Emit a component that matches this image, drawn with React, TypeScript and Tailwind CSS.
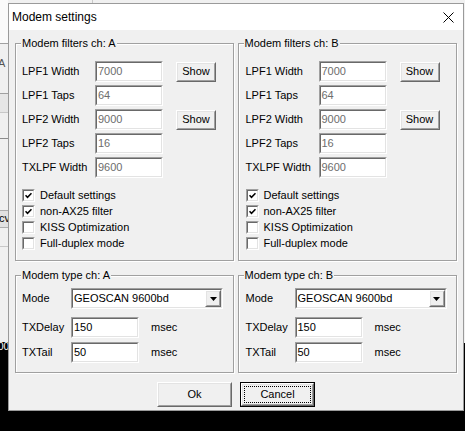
import React from "react";

function Sunken({ className = "", inner = "bg-white", children }: { className?: string; inner?: string; children?: React.ReactNode }) {
  return (
    <div className={`border border-t-[#a0a0a0] border-l-[#a0a0a0] border-r-white border-b-white ${className}`}>
      <div className={`h-full w-full border border-t-[#696969] border-l-[#696969] border-r-[#e3e3e3] border-b-[#e3e3e3] ${inner}`}>
        {children}
      </div>
    </div>
  );
}

function Raised({ className = "", children }: { className?: string; children?: React.ReactNode }) {
  return (
    <div className={`border border-t-white border-l-white border-r-[#696969] border-b-[#696969] bg-[#f0f0f0] ${className}`}>
      <div className="flex h-full w-full items-center justify-center border border-t-[#e3e3e3] border-l-[#e3e3e3] border-r-[#a0a0a0] border-b-[#a0a0a0]">
        {children}
      </div>
    </div>
  );
}

function Edit({ value, disabled = false, w = "w-[68px]" }: { value: string; disabled?: boolean; w?: string }) {
  return (
    <Sunken className={`${w} h-[21px]`} inner="bg-white flex items-center">
      <span className={`pl-[1px] leading-none ${disabled ? "text-[#6d6d6d]" : "text-black"}`}>{value}</span>
    </Sunken>
  );
}

function Check({ checked, label }: { checked: boolean; label: string }) {
  return (
    <div className="flex h-[15px] items-center">
      <Sunken className="h-[13px] w-[13px]" inner="bg-white flex items-center justify-center">
        {checked && (
          <svg width="7" height="7" viewBox="0 0 7 7">
            <path d="M0.5 3.2 L2.5 5.3 L6.5 1.2" fill="none" stroke="#000" strokeWidth="1.6" />
          </svg>
        )}
      </Sunken>
      <span className="ml-[5px]">{label}</span>
    </div>
  );
}

function Group({ title, className = "", children }: { title: string; className?: string; children?: React.ReactNode }) {
  return (
    <div className={`relative border border-[#a0a0a0] shadow-[inset_1px_1px_0_#fff,1px_1px_0_#fff] ${className}`}>
      <span className="absolute left-[5px] top-[-7px] bg-[#f0f0f0] px-[1px] leading-[13px]">{title}</span>
      {children}
    </div>
  );
}

function FilterRow({ label, value, show }: { label: string; value: string; show?: boolean }) {
  return (
    <div className="flex h-[21px] items-center">
      <span className="w-[73px]">{label}</span>
      <Edit value={value} disabled />
      {show && <Raised className="ml-[13px] h-[20px] w-[40px]">Show</Raised>}
    </div>
  );
}

function Filters({ ch, pl }: { ch: string; pl: string }) {
  return (
    <Group title={`Modem filters ch: ${ch}`} className={`h-[218px] ${ch === "A" ? "w-[219px]" : "w-[220px]"}`}>
      <div className={`flex flex-col pt-[17px] ${pl}`}>
        <div className="flex flex-col gap-[3px]">
          <FilterRow label="LPF1 Width" value="7000" show />
          <FilterRow label="LPF1 Taps" value="64" />
          <FilterRow label="LPF2 Width" value="9000" show />
          <FilterRow label="LPF2 Taps" value="16" />
          <FilterRow label="TXLPF Width" value="9600" />
        </div>
        <div className="mt-[10px] flex flex-col gap-[1px]">
          <Check checked label="Default settings" />
          <Check checked label="non-AX25 filter" />
          <Check checked={false} label="KISS Optimization" />
          <Check checked={false} label="Full-duplex mode" />
        </div>
      </div>
    </Group>
  );
}

function ModemType({ ch, pl }: { ch: string; pl: string }) {
  return (
    <Group title={`Modem type ch: ${ch}`} className={`h-[98px] ${ch === "A" ? "w-[219px]" : "w-[220px]"}`}>
      <div className={`flex flex-col pt-[12px] ${pl}`}>
        <div className="flex h-[21px] items-center">
          <span className="w-[49px]">Mode</span>
          <Sunken className="h-[21px] w-[152px]" inner="bg-white flex items-center">
            <span className="flex-1 pl-[1px]">GEOSCAN 9600bd</span>
            <Raised className="h-[17px] w-[16px]">
              <svg width="7" height="4" viewBox="0 0 7 4">
                <path d="M0 0 H7 L3.5 4 Z" fill="#000" />
              </svg>
            </Raised>
          </Sunken>
        </div>
        <div className="mt-[8px] flex flex-col gap-[4px]">
          <div className="flex h-[21px] items-center">
            <span className="w-[49px]">TXDelay</span>
            <Edit value="150" />
            <span className="ml-[12px]">msec</span>
          </div>
          <div className="flex h-[21px] items-center">
            <span className="w-[49px]">TXTail</span>
            <Edit value="50" />
            <span className="ml-[12px]">msec</span>
          </div>
        </div>
      </div>
    </Group>
  );
}

export default function App() {
  return (
    <div className="relative h-[431px] w-[465px] overflow-hidden bg-[#f0f0f0] font-['Liberation_Sans',Arial,sans-serif] text-[11px] text-black">
      {/* desktop background behind the dialog */}
      <div className="absolute left-0 top-0 h-[43px] w-[8px] bg-[#fafafa]" />
      <div className="absolute left-0 top-[43px] h-[1px] w-[8px] bg-[#a0a0a0]" />
      <span className="absolute left-[-2px] top-[55px] text-[11px] text-[#555]">A</span>
      <div className="absolute left-0 top-[93px] h-[1px] w-[8px] bg-[#a0a0a0]" />
      <div className="absolute left-0 top-[94px] h-[18px] w-[8px] bg-[#e6e6e6]" />
      <div className="absolute left-0 top-[112px] h-[1px] w-[8px] bg-[#c8c8c8]" />
      <div className="absolute left-0 top-[138px] h-[1px] w-[8px] bg-[#8c8c8c]" />
      <div className="absolute left-0 top-[210px] h-[18px] w-[8px] border-b border-t border-[#adadad] bg-[#e1e1e1]" />
      <span className="absolute left-[-1px] top-[211px] text-[11px] leading-[14px]">cv</span>
      <div className="absolute left-0 top-[246px] h-[1px] w-[8px] bg-[#c8c8c8]" />
      <div className="absolute left-0 top-[342px] h-[89px] w-[8px] bg-black" />
      <span className="absolute left-[-2px] top-[341px] text-[10px] leading-[12px] text-white">00</span>
      <div className="absolute left-[92px] top-0 h-[3px] w-[1px] bg-[#c8c8c8]" />
      <div className="absolute right-0 top-[343px] h-[88px] w-[2px] bg-black" />
      <div className="absolute bottom-0 left-0 h-[20px] w-[465px] bg-black" />

      {/* dialog window */}
      <div className="absolute left-[8px] top-[3px] flex h-[408px] w-[456px] flex-col border border-[#9a9a9a] bg-[#f0f0f0]">
        <div className="flex h-[26px] items-center justify-between bg-white">
          <span className="pl-[3px] text-[12px]">Modem settings</span>
          <svg width="11" height="11" viewBox="0 0 11 11" className="mr-[9px]">
            <path d="M0.5 0.5 L10.5 10.5 M10.5 0.5 L0.5 10.5" stroke="#000" strokeWidth="1" />
          </svg>
        </div>
        <div className="flex flex-1 flex-col px-[6px] pt-[13px]">
          <div className="flex gap-[4px]">
            <Filters ch="A" pl="pl-[6px]" />
            <Filters ch="B" pl="pl-[7px]" />
          </div>
          <div className="mt-[14px] flex gap-[4px]">
            <ModemType ch="A" pl="pl-[6px]" />
            <ModemType ch="B" pl="pl-[7px]" />
          </div>
          <div className="mt-[9px] flex justify-center gap-[8px]">
            <Raised className="h-[25px] w-[75px]">Ok</Raised>
            <div className="h-[25px] w-[75px] border border-black">
              <Raised className="h-full w-full">
                <div className="flex h-[17px] w-[67px] items-center justify-center border border-dotted border-black">Cancel</div>
              </Raised>
            </div>
          </div>
        </div>
      </div>
    </div>
  );
}
